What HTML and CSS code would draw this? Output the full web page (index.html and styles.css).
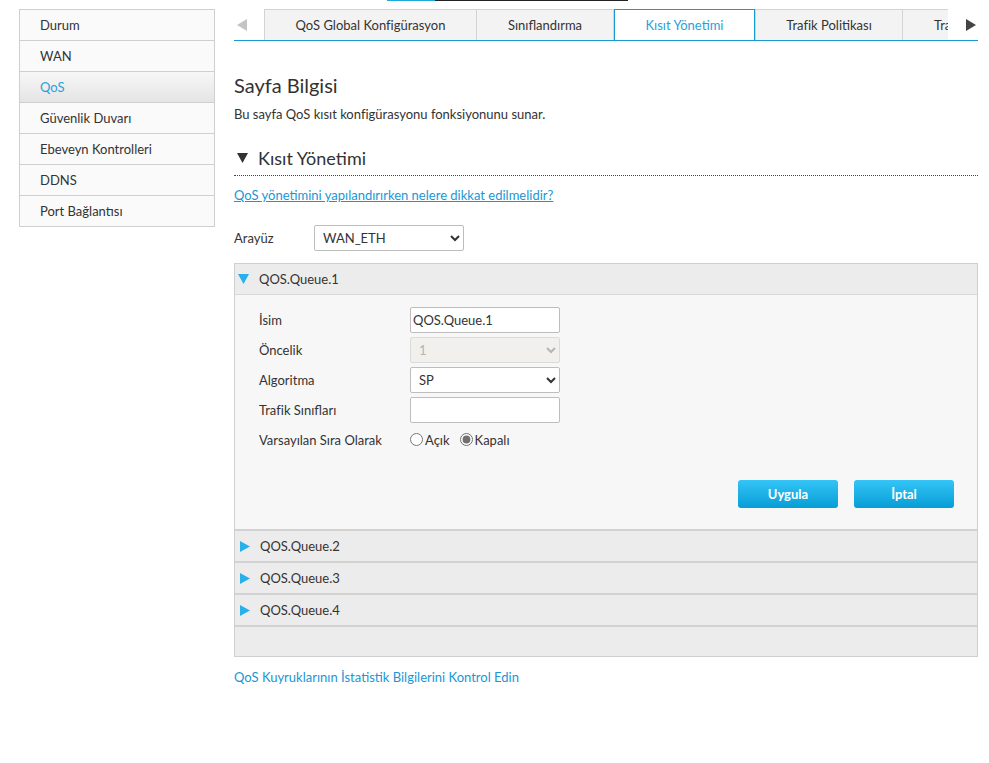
FILE: index.html
```html
<!DOCTYPE html>
<html lang="tr">
<head>
<meta charset="utf-8">
<title>QoS</title>
<link rel="stylesheet" href="styles.css">
</head>
<body>
<div class="page">
  <ul class="sidebar">
    <li class="nav-item">Durum</li>
    <li class="nav-item">WAN</li>
    <li class="nav-item active">QoS</li>
    <li class="nav-item">Güvenlik Duvarı</li>
    <li class="nav-item">Ebeveyn Kontrolleri</li>
    <li class="nav-item">DDNS</li>
    <li class="nav-item">Port Bağlantısı</li>
  </ul>

  <div class="main">
    <div class="scroll-track"><span class="scroll-thumb"></span><span class="scroll-rest"></span></div>
    <div class="tabbar">
      <div class="tab-arrow left">
        <svg width="10" height="12" viewBox="0 0 10 12"><polygon points="10,0 10,12 0,6" fill="#c4c4c4"/></svg>
      </div>
      <div class="tabs">
        <div class="tab t1">QoS Global Konfigürasyon</div>
        <div class="tab t2">Sınıflandırma</div>
        <div class="tab t3 active">Kısıt Yönetimi</div>
        <div class="tab t4">Trafik Politikası</div>
        <div class="tab t5">Trafik İzleme</div>
      </div>
      <div class="tab-arrow right">
        <svg width="10" height="12" viewBox="0 0 10 12"><polygon points="0,0 0,12 10,6" fill="#444"/></svg>
      </div>
    </div>

    <h1 class="page-title">Sayfa Bilgisi</h1>
    <p class="page-desc">Bu sayfa QoS kısıt konfigürasyonu fonksiyonunu sunar.</p>

    <h2 class="section-title">
      <svg class="sec-tri" width="11" height="10" viewBox="0 0 11 10"><polygon points="0,0 11,0 5.5,10" fill="#333"/></svg>
      Kısıt Yönetimi
    </h2>
    <div class="dotted"></div>
    <a class="help-link" href="#">QoS yönetimini yapılandırırken nelere dikkat edilmelidir?</a>

    <div class="iface-row">
      <label class="iface-label">Arayüz</label>
      <select class="iface-select"><option>WAN_ETH</option></select>
    </div>

    <div class="panel">
      <div class="q-head open">
        <svg class="q-tri" width="11" height="10" viewBox="0 0 11 10"><polygon points="0,0 11,0 5.5,10" fill="#29b0ea"/></svg>
        <span>QOS.Queue.1</span>
      </div>
      <div class="q-body">
        <div class="f-row"><span class="f-label">İsim</span><input class="f-input" type="text" value="QOS.Queue.1"></div>
        <div class="f-row"><span class="f-label">Öncelik</span><select class="f-input f-select" disabled><option>1</option></select></div>
        <div class="f-row"><span class="f-label">Algoritma</span><select class="f-input f-select"><option>SP</option></select></div>
        <div class="f-row"><span class="f-label">Trafik Sınıfları</span><input class="f-input" type="text" value=""></div>
        <div class="f-row radio-row"><span class="f-label">Varsayılan Sıra Olarak</span>
          <label class="radio"><input type="radio" name="def">Açık</label>
          <label class="radio"><input type="radio" name="def" checked>Kapalı</label>
        </div>
        <div class="btn-row">
          <button class="btn">Uygula</button>
          <button class="btn">İptal</button>
        </div>
      </div>
      <div class="q-head closed">
        <svg class="q-tri closed-tri" width="10" height="11" viewBox="0 0 10 11"><polygon points="0,0 10,5.5 0,11" fill="#29b0ea"/></svg>
        <span>QOS.Queue.2</span>
      </div>
      <div class="q-head closed">
        <svg class="q-tri closed-tri" width="10" height="11" viewBox="0 0 10 11"><polygon points="0,0 10,5.5 0,11" fill="#29b0ea"/></svg>
        <span>QOS.Queue.3</span>
      </div>
      <div class="q-head closed">
        <svg class="q-tri closed-tri" width="10" height="11" viewBox="0 0 10 11"><polygon points="0,0 10,5.5 0,11" fill="#29b0ea"/></svg>
        <span>QOS.Queue.4</span>
      </div>
      <div class="q-head closed empty"></div>
    </div>

    <a class="stats-link" href="#">QoS Kuyruklarının İstatistik Bilgilerini Kontrol Edin</a>
  </div>
</div>
</body>
</html>
```

FILE: styles.css
```css
* { box-sizing: border-box; }
html, body { margin: 0; padding: 0; background: #fff; }
body {
  font-family: Lato, "Liberation Sans", sans-serif;
  font-size: 13px;
  color: #333;
}
.page {
  display: flex;
  align-items: flex-start;
  gap: 19px;
  padding: 0 11px 0 19px;
}
.sidebar {
  list-style: none;
  margin: 9px 0 0 0;
  padding: 0;
  width: 196px;
  border: 1px solid #cfcfcf;
  border-bottom: none;
  background: #fafafa;
}
.nav-item {
  height: 31px;
  line-height: 30px;
  padding-left: 20px;
  border-bottom: 1px solid #cfcfcf;
  color: #333;
}
.nav-item.active {
  color: #2a9fd8;
  background: linear-gradient(#f7f7f7, #e4e4e4);
}
.main {
  width: 744px;
  display: flex;
  flex-direction: column;
}
.scroll-track {
  display: flex;
  height: 1px;
  margin-left: 153px;
}
.scroll-thumb { width: 48px; background: #1fa8dc; }
.scroll-rest { width: 193px; background: #222; }
.tabbar {
  margin-top: 8px;
  display: flex;
  height: 32px;
  border-bottom: 1px solid #1a9bd0;
}
.tab-arrow {
  width: 30px;
  display: flex;
  align-items: center;
  justify-content: center;
}
.tab-arrow.left { justify-content: flex-start; padding-left: 3px; }
.tab-arrow.right { justify-content: flex-end; padding-right: 2px; }
.tabs {
  flex: 1;
  display: flex;
  overflow: hidden;
}
.tab {
  flex: none;
  height: 31px;
  line-height: 31px;
  text-align: center;
  background: #f3f3f3;
  border-top: 1px solid #d3d3d3;
  border-left: 1px solid #d3d3d3;
  border-right: 1px solid #d3d3d3;
  white-space: nowrap;
  color: #333;
}
.t1 { width: 213px; }
.t2 { width: 138px; margin-left: -1px; }
.t3 { width: 141px; }
.t4 { width: 148px; }
.t5 { width: 140px; margin-left: -1px; text-align: left; padding-left: 31px; }
.tab.active {
  background: #fff;
  color: #2a9fd8;
  border-color: #1a9bd0;
}
.page-title {
  margin: 32px 0 0 0;
  font-size: 20px;
  font-weight: normal;
  line-height: 24px;
  color: #333;
}
.page-desc {
  margin: 8px 0 0 0;
  line-height: 18px;
}
.section-title {
  margin: 23px 0 0 0;
  display: flex;
  align-items: center;
  font-size: 18px;
  font-weight: normal;
  line-height: 24px;
  color: #333;
}
.sec-tri { margin: 0 10px 0 3px; }
.dotted {
  margin-top: 5px;
  border-top: 1px dotted #444;
}
.help-link {
  margin-top: 10px;
  align-self: flex-start;
  color: #1a96d4;
  text-decoration: underline;
  line-height: 18px;
}
.iface-row {
  margin-top: 21px;
  display: flex;
  align-items: center;
}
.iface-label { width: 80px; }
.iface-select {
  width: 150px;
  height: 26px;
  border: 1px solid #bdbdbd;
  border-radius: 2px;
  background: #fff;
  font-family: inherit;
  font-size: 13px;
  color: #333;
  padding: 0 4px;
}
.panel {
  margin-top: 12px;
  border: 1px solid #cfcfcf;
  background: #ececec;
}
.q-head {
  height: 31px;
  display: flex;
  align-items: center;
  background: #ececec;
}
.q-head.open { border-bottom: 1px solid #d8d8d8; height: 31px; }
.q-head.closed { border-top: 2px solid #d2d2d2; height: 32px; }
.q-head.empty { height: 31px; }
.q-tri { margin: 0 10px 0 3px; }
.closed-tri { margin: 0 10px 0 5px; }
.q-body {
  background: #f7f7f7;
  padding: 12px 23px 21px 24px;
}
.f-row {
  display: flex;
  align-items: center;
  height: 25px;
  margin-bottom: 5px;
}
.f-label { width: 151px; }
.f-input {
  width: 150px;
  height: 26px;
  border: 1px solid #bdbdbd;
  border-radius: 2px;
  background: #fff;
  font-family: inherit;
  font-size: 13px;
  color: #333;
  padding: 0 2px;
}
.f-select { padding: 0 4px; }
.f-select:disabled { background: #efeee8; color: #999; border-color: #cfcfcf; }
.radio-row { margin-top: 3px; }
.radio {
  display: flex;
  align-items: center;
  margin-right: 10px;
}
.radio input { margin: 0 2px 0 0; width: 13px; height: 13px; accent-color: #707070; }
.btn-row {
  display: flex;
  justify-content: flex-end;
  gap: 16px;
  margin-top: 28px;
}
.btn {
  width: 100px;
  height: 28px;
  border: none;
  border-radius: 3px;
  background: linear-gradient(#35c4f6, #069ed6);
  color: #fff;
  font-family: inherit;
  font-size: 13px;
  font-weight: bold;
}
.stats-link {
  margin-top: 11px;
  align-self: flex-start;
  color: #1a96d4;
  text-decoration: none;
  line-height: 18px;
}
```
